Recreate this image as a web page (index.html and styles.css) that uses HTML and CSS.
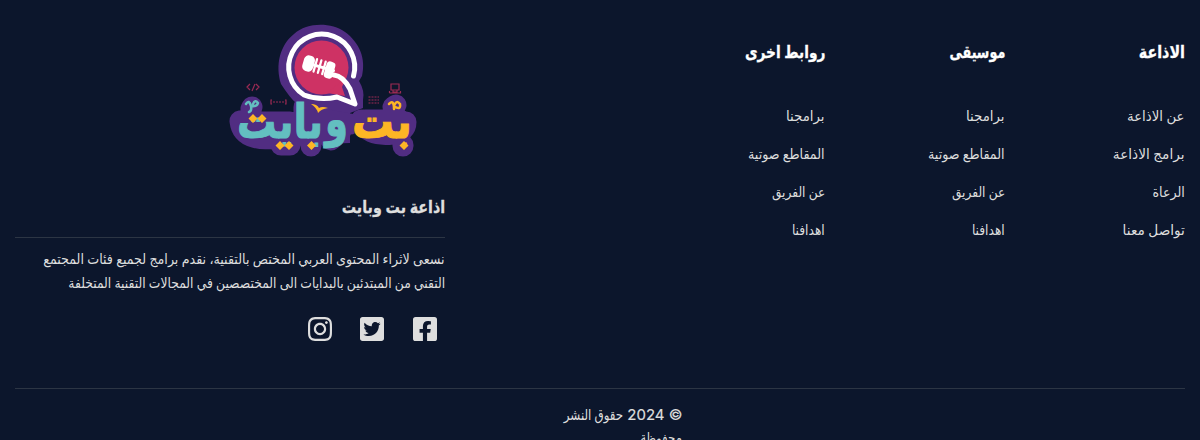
FILE: index.html
```html
<!DOCTYPE html>
<html lang="ar" dir="rtl">
<head>
<meta charset="utf-8">
<title>اذاعة بت وبايت</title>
<link rel="stylesheet" href="styles.css">
</head>
<body>
<footer class="footer">
  <div class="top">
    <nav class="columns">
      <section class="column">
        <h2 class="heading"><span class="fit fit-84">الاذاعة</span></h2>
        <ul class="links"><li><span class="fit fit-95">عن الاذاعة</span></li><li><span class="fit fit-97">برامج الاذاعة</span></li><li><span class="fit fit-91">الرعاة</span></li><li><span class="fit fit-97">تواصل معنا</span></li></ul>
      </section>
      <section class="column">
        <h2 class="heading"><span class="fit fit-75">موسيقى</span></h2>
        <ul class="links"><li><span class="fit fit-95">برامجنا</span></li><li><span class="fit fit-91">المقاطع صوتية</span></li><li><span class="fit fit-87">عن الفريق</span></li><li><span class="fit fit-87">اهدافنا</span></li></ul>
      </section>
      <section class="column">
        <h2 class="heading"><span class="fit fit-81">روابط اخرى</span></h2>
        <ul class="links"><li><span class="fit fit-95">برامجنا</span></li><li><span class="fit fit-91">المقاطع صوتية</span></li><li><span class="fit fit-87">عن الفريق</span></li><li><span class="fit fit-87">اهدافنا</span></li></ul>
      </section>
    </nav>
    <section class="about">
      <svg class="logo" viewBox="220 15 205 150" role="img" aria-label="بت وبايت">
        <path class="purple" d="M281 84 C275 65 280 45 294 34 C307 22 331 22 345 32 C360 43 366 59 362 76 L359 81 Q365 91 363 100 L363 108 L350 113 L350 143 L296 145 V103 Q290 98 281 84Z"/>
        <path class="purple-band" d="M240 121 C242 139 263 141 278 137 Q301 134 308 135 Q319 135 323 119 L350 124 M251 109 L252 107 M361 120 Q366 137 393 134 Q406 132 406 122 M393 107 L396 105 M281 145 H290 M311 145 V146 M331 140 L341 131 M403 145 V146 M304 107 V132 M255 122 H290 M365 120 H400 M278 130 H290"/>
        <circle class="rose" cx="321.500" cy="67.500" r="27"/>
        <path class="rose" d="M327 93 L345 96 L342 87 L346 78Z"/>
        <path class="ring" d="M353.500 76 A33 33 0 1 0 304 95 Q320 101 337 97 L355 104 L350 89 Q343 76 334 75"/>
        <g class="mic" transform="rotate(16 319 67)">
          <rect x="304" y="60" width="8" height="13" rx="3"/>
          <rect x="327" y="60" width="6" height="14" rx="2"/>
          <path d="M307 66.500 H334"/>
          <path class="ribs" d="M315 60 V73 M319.500 60 V73 M324 60 V73"/>
        </g>
        <g class="lettering">
          <text class="gold" x="412" y="138" textLength="60" lengthAdjust="spacingAndGlyphs">بت</text>
          <text class="teal" x="348" y="136" textLength="23" lengthAdjust="spacingAndGlyphs">و</text>
          <text class="teal" x="323" y="138" textLength="86" lengthAdjust="spacingAndGlyphs">بايت</text>
        </g>
        <path class="diamonds" d="M280 141 l4.500 4.500 -4.500 4.500 -4.500 -4.500z M289 141 l4.500 4.500 -4.500 4.500 -4.500 -4.500z M311.500 141 l4.500 4.500 -4.500 4.500 -4.500 -4.500z M404 141 l4.500 4.500 -4.500 4.500 -4.500 -4.500z M253 114 l4.500 4.500 -4.500 4.500 -4.500 -4.500z M262 114 l4.500 4.500 -4.500 4.500 -4.500 -4.500z"/>
        <path class="flourish teal-line" d="M246 104 Q249 99 251 106 Q252 111 249 112 M251 106 Q257 107 258 103 Q255 99 253 104"/>
        <path class="flourish gold-line" d="M389 104 Q394 99 394 109 M394 106 Q401 111 400 104 Q397 100 395 104"/>
        <path class="bird" d="M311 104 Q317 104 319 108 Q322 106 328 108 Q321 109 318 113 Q317 108 311 104Z"/>
        <g class="fine">
          <path d="M250 84 L247 87 L250 90 M255 84 L252 91 M256 84 L259 87 L256 90"/>
          <path d="M391 84 H399 V90 H391Z M389.500 93 H400.500 V91 M389.500 93 V91 M393 90 V92 H397 V90"/>
          <path class="dashed" d="M368.500 97 H379 M368.500 100 H379 M368.500 103 H379"/>
          <path class="dashed" d="M273 102 H284"/>
          <path d="M272 100 H271 V104 H272 M285 100 H286 V104 H285"/>
        </g>
      </svg>
      <h2 class="title"><span class="fit fit-84">اذاعة بت وبايت</span></h2>
      <p class="text"><span class="fit fit-91">نسعى لاثراء المحتوى العربي المختص بالتقنية، نقدم برامج لجميع فئات المجتمع</span><br><span class="fit fit-88">التقني من المبتدئين بالبدايات الى المختصصين في المجالات التقنية المتخلفة</span></p>
      <div class="social">
        <svg viewBox="0 0 448 512"><path d="M400 32H48A48 48 0 0 0 0 80v352a48 48 0 0 0 48 48h137.250V327.690h-63V256h63v-54.640c0-62.150 37-96.480 93.670-96.480 27.140 0 55.520 4.840 55.520 4.840v61h-31.270c-30.810 0-40.420 19.120-40.420 38.730V256h68.780l-11 71.690h-57.780V480H400a48 48 0 0 0 48-48V80a48 48 0 0 0-48-48z"/></svg>
        <svg viewBox="0 0 448 512"><path d="M400 32H48C21.500 32 0 53.500 0 80v352c0 26.500 21.500 48 48 48h352c26.500 0 48-21.500 48-48V80c0-26.500-21.500-48-48-48zm-48.900 158.800c.2 2.800.2 5.700.2 8.500 0 86.700-66 186.600-186.600 186.600-37.200 0-71.700-10.800-100.700-29.400 5.300.6 10.400.8 15.800.8 30.700 0 58.900-10.400 81.400-28-28.800-.6-53-19.500-61.300-45.500 10.100 1.500 19.200 1.500 29.600-1.200-30-6.100-52.500-32.500-52.500-64.400v-.8c8.700 4.900 18.900 7.900 29.600 8.300a65.447 65.447 0 0 1-29.200-54.600c0-12.200 3.200-23.400 8.900-33.100 32.300 39.800 80.800 65.800 135.200 68.600-9.300-44.500 24-80.600 64-80.600 18.900 0 35.900 7.900 47.900 20.700 14.800-2.800 29-8.300 41.600-15.800-4.900 15.200-15.200 28-28.800 36.100 13.200-1.400 26-5.100 37.800-10.200-8.900 13.100-20.100 24.700-32.900 34z"/></svg>
        <svg viewBox="0 0 448 512"><path d="M224.100 141c-63.600 0-114.900 51.300-114.900 114.900s51.300 114.900 114.900 114.900S339 319.500 339 255.900 287.700 141 224.100 141zm0 189.600c-41.100 0-74.700-33.500-74.700-74.700s33.500-74.700 74.700-74.700 74.700 33.500 74.700 74.700-33.600 74.700-74.700 74.700zm146.400-194.300c0 14.900-12 26.800-26.800 26.800-14.900 0-26.800-12-26.800-26.800s12-26.800 26.800-26.800 26.800 12 26.800 26.800zm76.100 27.200c-1.700-35.900-9.900-67.700-36.200-93.900-26.200-26.200-58-34.400-93.900-36.200-37-2.100-147.900-2.100-184.900 0-35.800 1.700-67.600 9.900-93.900 36.100s-34.400 58-36.200 93.900c-2.100 37-2.100 147.900 0 184.900 1.700 35.900 9.900 67.700 36.200 93.900s58 34.400 93.900 36.200c37 2.100 147.900 2.100 184.900 0 35.900-1.700 67.700-9.900 93.900-36.200 26.200-26.200 34.400-58 36.200-93.900 2.100-37 2.100-147.800 0-184.800zM398.800 388c-7.800 19.600-22.900 34.700-42.600 42.600-29.500 11.700-99.500 9-132.100 9s-102.700 2.600-132.100-9c-19.600-7.800-34.700-22.900-42.600-42.600-11.700-29.500-9-99.500-9-132.100s-2.600-102.700 9-132.100c7.800-19.600 22.900-34.700 42.600-42.600 29.500-11.700 99.500-9 132.100-9s102.700-2.600 132.100 9c19.600 7.800 34.700 22.900 42.600 42.600 11.700 29.500 9 99.500 9 132.100s2.700 102.700-9 132.100z"/></svg>
      </div>
    </section>
  </div>
  <div class="bottom"><p class="copyright"><span class="year">© 2024</span> <span class="fit fit-79">حقوق النشر</span><br><span class="fit fit-79">محفوظة</span></p></div>
</footer>
</body>
</html>
```
FILE: styles.css
```css
* { box-sizing: border-box; }
body { margin: 0; background: #0c162c; color: #dedede; font: 15px/24px "Noto Sans", "DejaVu Sans", sans-serif; height: 440px; overflow: hidden; }
h2, p, ul { margin: 0; padding: 0; }
.footer { height: 440px; overflow: hidden; padding: 15px 15px 0; }
.top { display: flex; justify-content: space-between; height: 374px; border-bottom: 1px solid #2c3544; }
.columns { display: flex; }
.column { width: 180px; padding-top: 22px; }
.heading { font-size: 17px; line-height: 30px; color: #fff; -webkit-text-stroke: .3px #fff; }
.links { list-style: none; padding-top: 30px; font-size: 14px; line-height: 38px; }
.about { width: 430px; }
.fit { display: inline-block; white-space: nowrap; transform-origin: right center; }
.fit-75 { transform: scaleX(.75); }
.fit-79 { transform: scaleX(.79); }
.fit-81 { transform: scaleX(.81); }
.fit-84 { transform: scaleX(.84); }
.fit-87 { transform: scaleX(.87); }
.fit-88 { transform: scaleX(.88); }
.fit-91 { transform: scaleX(.905); }
.fit-95 { transform: scaleX(.95); }
.fit-97 { transform: scaleX(.975); }
.logo { display: block; width: 205px; height: 150px; margin-right: 20px; }
.title { font-size: 17px; line-height: 30px; padding: 27px 0 15px; border-bottom: 1px solid #2c3544; -webkit-text-stroke: .3px #dedede; }
.text { font-size: 14px; padding-top: 9px; }
.social { display: flex; gap: 28.5px; padding: 20px 8.5px 0 0; }
.social svg { width: 24px; height: 28px; fill: #dedede; }
.copyright { width: 165px; margin: 14px auto 0; white-space: nowrap; line-height: 23px; }
.year { font-family: Inter, sans-serif; font-size: 15px; -webkit-text-stroke: .2px #dedede; }
.purple { fill: #512d82; }
.purple-band { fill: none; stroke: #512d82; stroke-width: 21; stroke-linecap: round; stroke-linejoin: round; }
.rose { fill: #ce3264; }
.ring { fill: none; stroke: #fff; stroke-width: 5; stroke-linecap: round; stroke-linejoin: round; }
.mic { fill: #fff; stroke: #fff; stroke-width: 3; stroke-linecap: round; }
.ribs { stroke-width: 2.2; }
.lettering { font: bold 48px "DejaVu Sans", sans-serif; }
.gold { fill: #fdb625; stroke: #fdb625; }
.teal { fill: #63bfc0; stroke: #63bfc0; }
.diamonds { fill: #fdb625; }
.flourish { fill: none; stroke-width: 2.5; stroke-linecap: round; }
.teal-line { stroke: #63bfc0; }
.gold-line { stroke: #fdb625; }
.bird { fill: #fdb625; }
.fine { fill: none; stroke: #9b2a53; stroke-width: 1.2; }
.dashed { stroke-dasharray: 2 1; }
```
